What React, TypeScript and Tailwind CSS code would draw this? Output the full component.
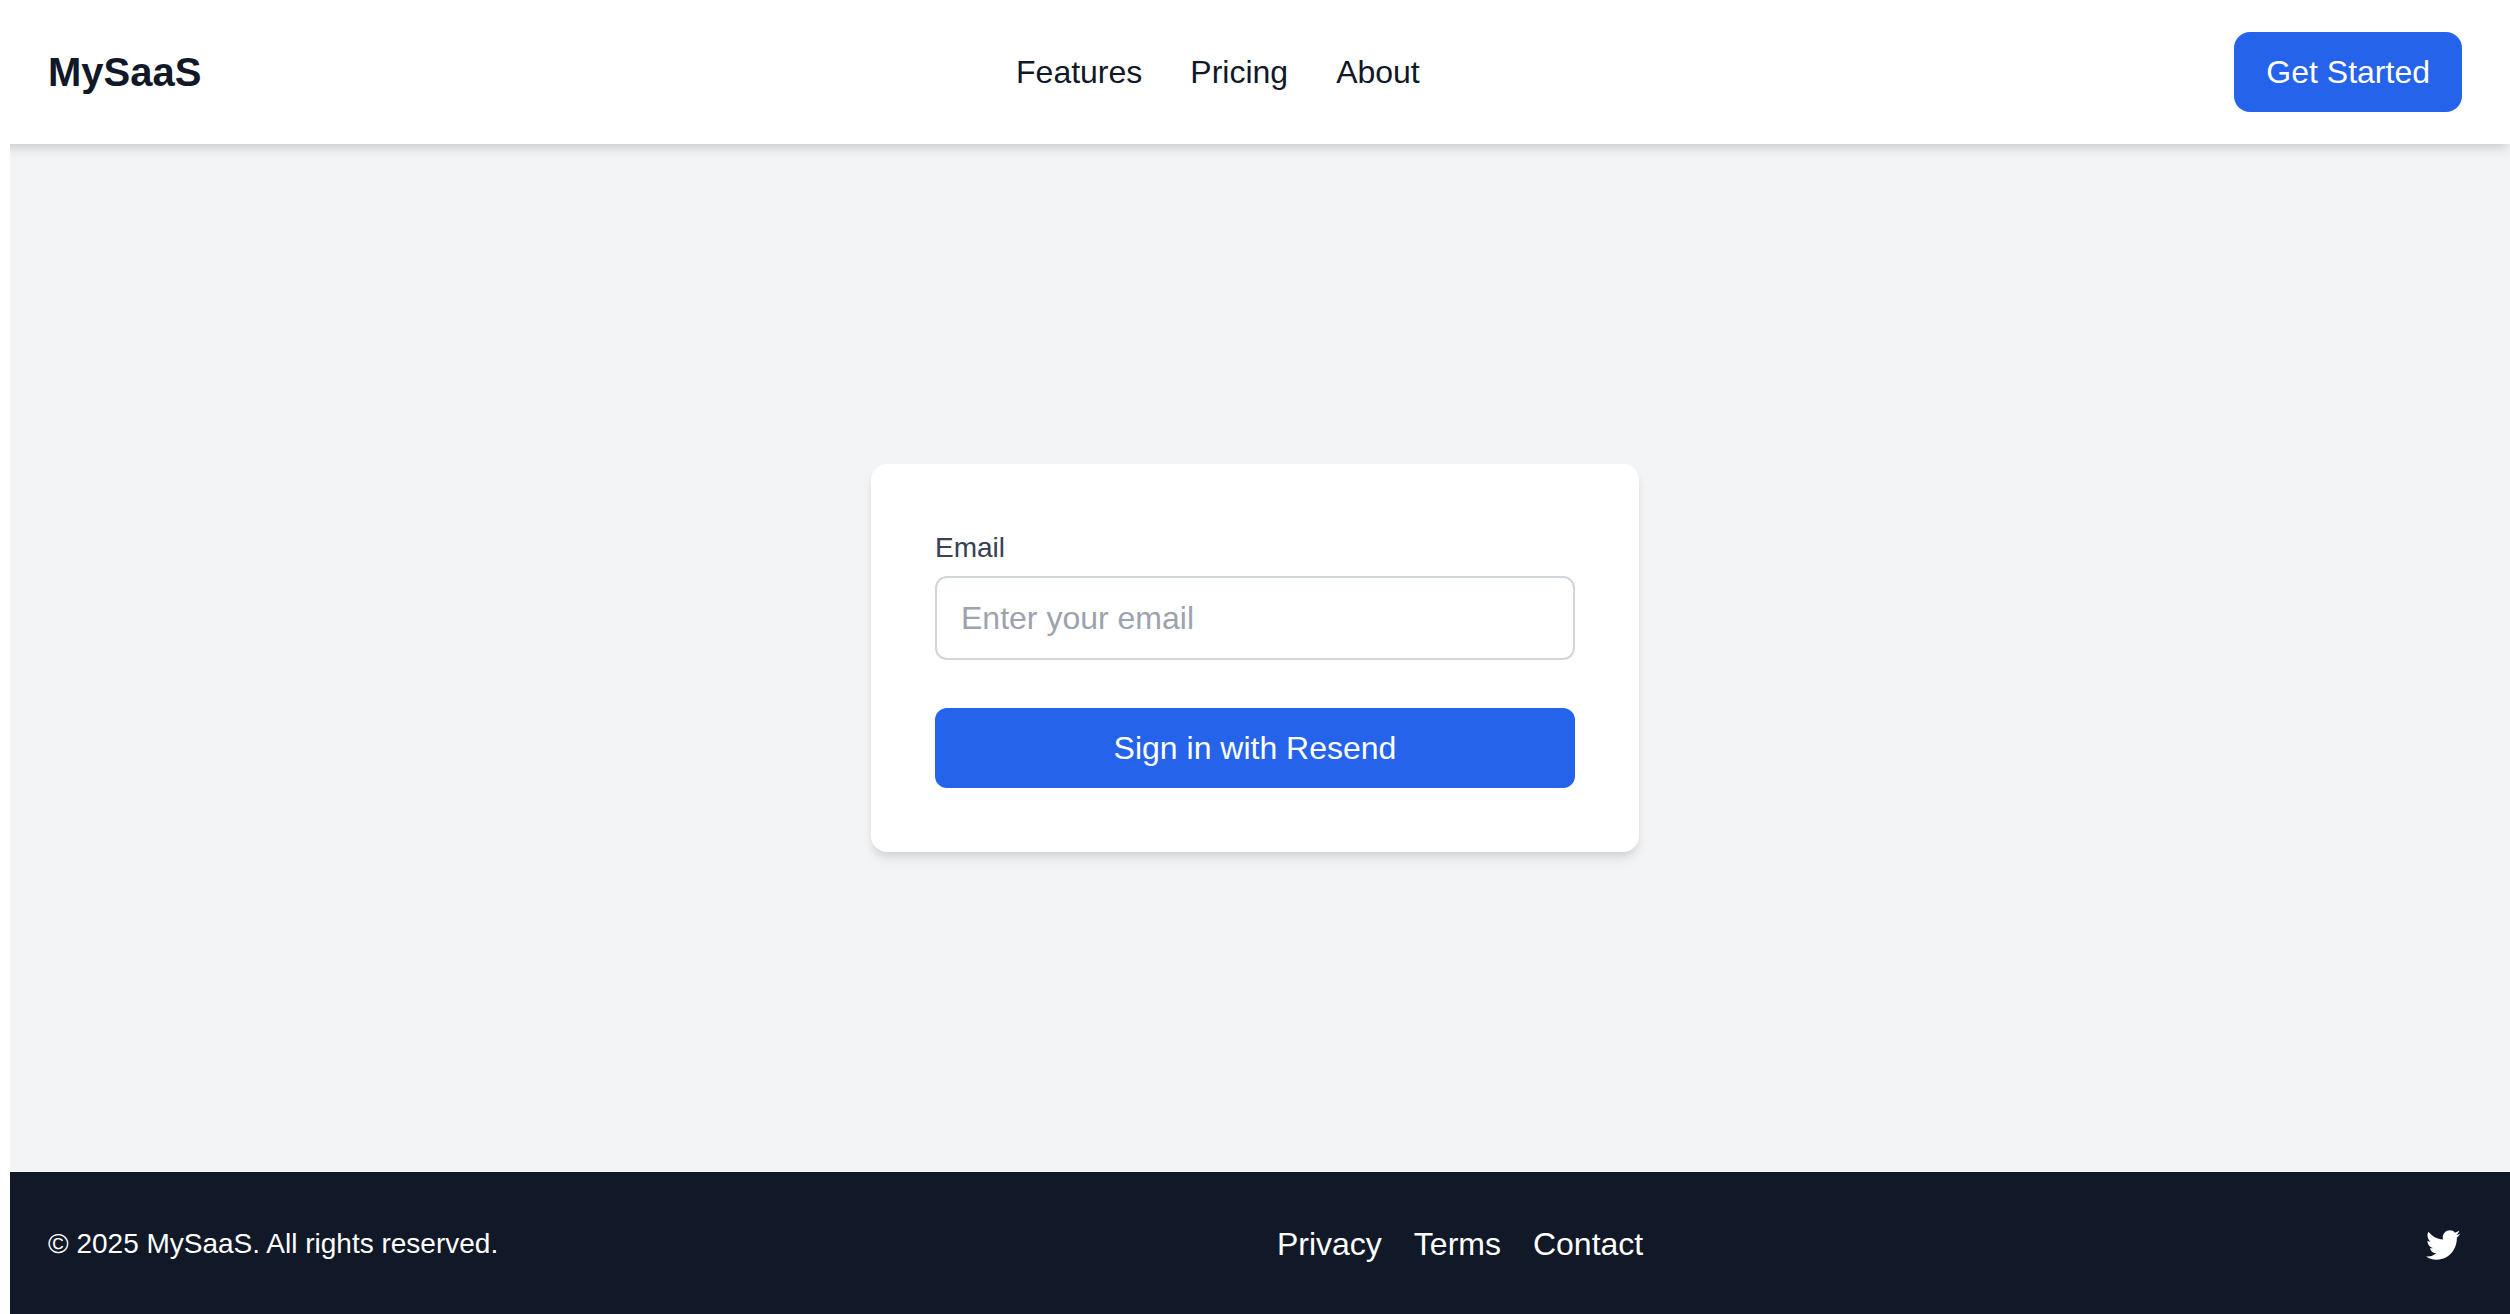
import { useState } from "react";

const navLinks = ["Features", "Pricing", "About"];
const footerLinks = ["Privacy", "Terms", "Contact"];

function Header() {
  return (
    <header className="relative bg-white shadow-[0_8px_12px_-2px_rgb(0_0_0/0.1),0_4px_8px_-4px_rgb(0_0_0/0.1)]">
      <div className="flex items-center justify-between px-12 py-8">
        <a href="#" className="text-[40px] leading-[56px] font-bold text-[#111827]">
          MySaaS
        </a>
        <nav className="flex gap-12">
          {navLinks.map((label) => (
            <a key={label} href="#" className="text-[#111827]">
              {label}
            </a>
          ))}
        </nav>
        <button type="button" className="rounded-2xl bg-[#2563eb] px-8 py-4 text-white">
          Get Started
        </button>
      </div>
    </header>
  );
}

function SignInForm() {
  const [email, setEmail] = useState("");

  return (
    <form
      onSubmit={(e) => e.preventDefault()}
      className="w-full max-w-[768px] rounded-2xl bg-white p-16 shadow-[0_8px_12px_-2px_rgb(0_0_0/0.1),0_4px_8px_-4px_rgb(0_0_0/0.1)]"
    >
      <label htmlFor="email" className="block text-[28px] leading-10 text-[#374151]">
        Email
      </label>
      <input
        id="email"
        type="email"
        value={email}
        onChange={(e) => setEmail(e.target.value)}
        placeholder="Enter your email"
        className="mt-2 block w-full rounded-xl border-2 border-[#d1d5db] bg-white px-6 py-4 placeholder:text-[#9ca3af]"
      />
      <button type="submit" className="mt-12 w-full rounded-xl bg-[#2563eb] py-4 text-white">
        Sign in with Resend
      </button>
    </form>
  );
}

function Footer() {
  return (
    <footer className="flex items-center justify-between bg-[#111827] px-12 pt-12 pb-[46px] text-white">
      <p className="text-[28px] leading-10">© 2025 MySaaS. All rights reserved.</p>
      <nav className="flex gap-8">
        {footerLinks.map((label) => (
          <a key={label} href="#">
            {label}
          </a>
        ))}
      </nav>
      <a href="#" aria-label="Twitter">
        <svg className="size-10" viewBox="0 0 40 40" fill="currentColor">
          <path
            transform="matrix(1.64 0 0 1.73 1.5 -0.6)"
            d="M22.46 6c-.77.35-1.6.58-2.46.69.88-.53 1.56-1.37 1.88-2.38-.83.5-1.75.85-2.72 1.05C18.37 4.5 17.26 4 16 4c-2.35 0-4.27 1.92-4.27 4.29 0 .34.04.67.11.98C8.28 9.09 5.11 7.38 3 4.79c-.37.63-.58 1.37-.58 2.15 0 1.49.75 2.81 1.91 3.56-.71 0-1.37-.2-1.95-.5v.03c0 2.08 1.48 3.82 3.44 4.21a4.22 4.22 0 0 1-1.93.07 4.28 4.28 0 0 0 4 2.98 8.521 8.521 0 0 1-5.33 1.84c-.34 0-.68-.02-1.02-.06C3.44 20.29 5.7 21 8.12 21 16 21 20.33 14.46 20.33 8.79c0-.19 0-.37-.01-.56.84-.6 1.56-1.36 2.14-2.23z"
          />
        </svg>
      </a>
    </footer>
  );
}

export default function App() {
  return (
    <div className="flex min-h-screen flex-col bg-[#f3f4f6] font-['Liberation_Sans',Arial,sans-serif] text-[32px] leading-[48px]">
      <Header />
      <main className="flex grow items-center justify-center">
        <SignInForm />
      </main>
      <Footer />
      {/* white gutter over the left edge of the page */}
      <div className="fixed inset-y-0 left-0 w-[10px] bg-white" />
    </div>
  );
}
